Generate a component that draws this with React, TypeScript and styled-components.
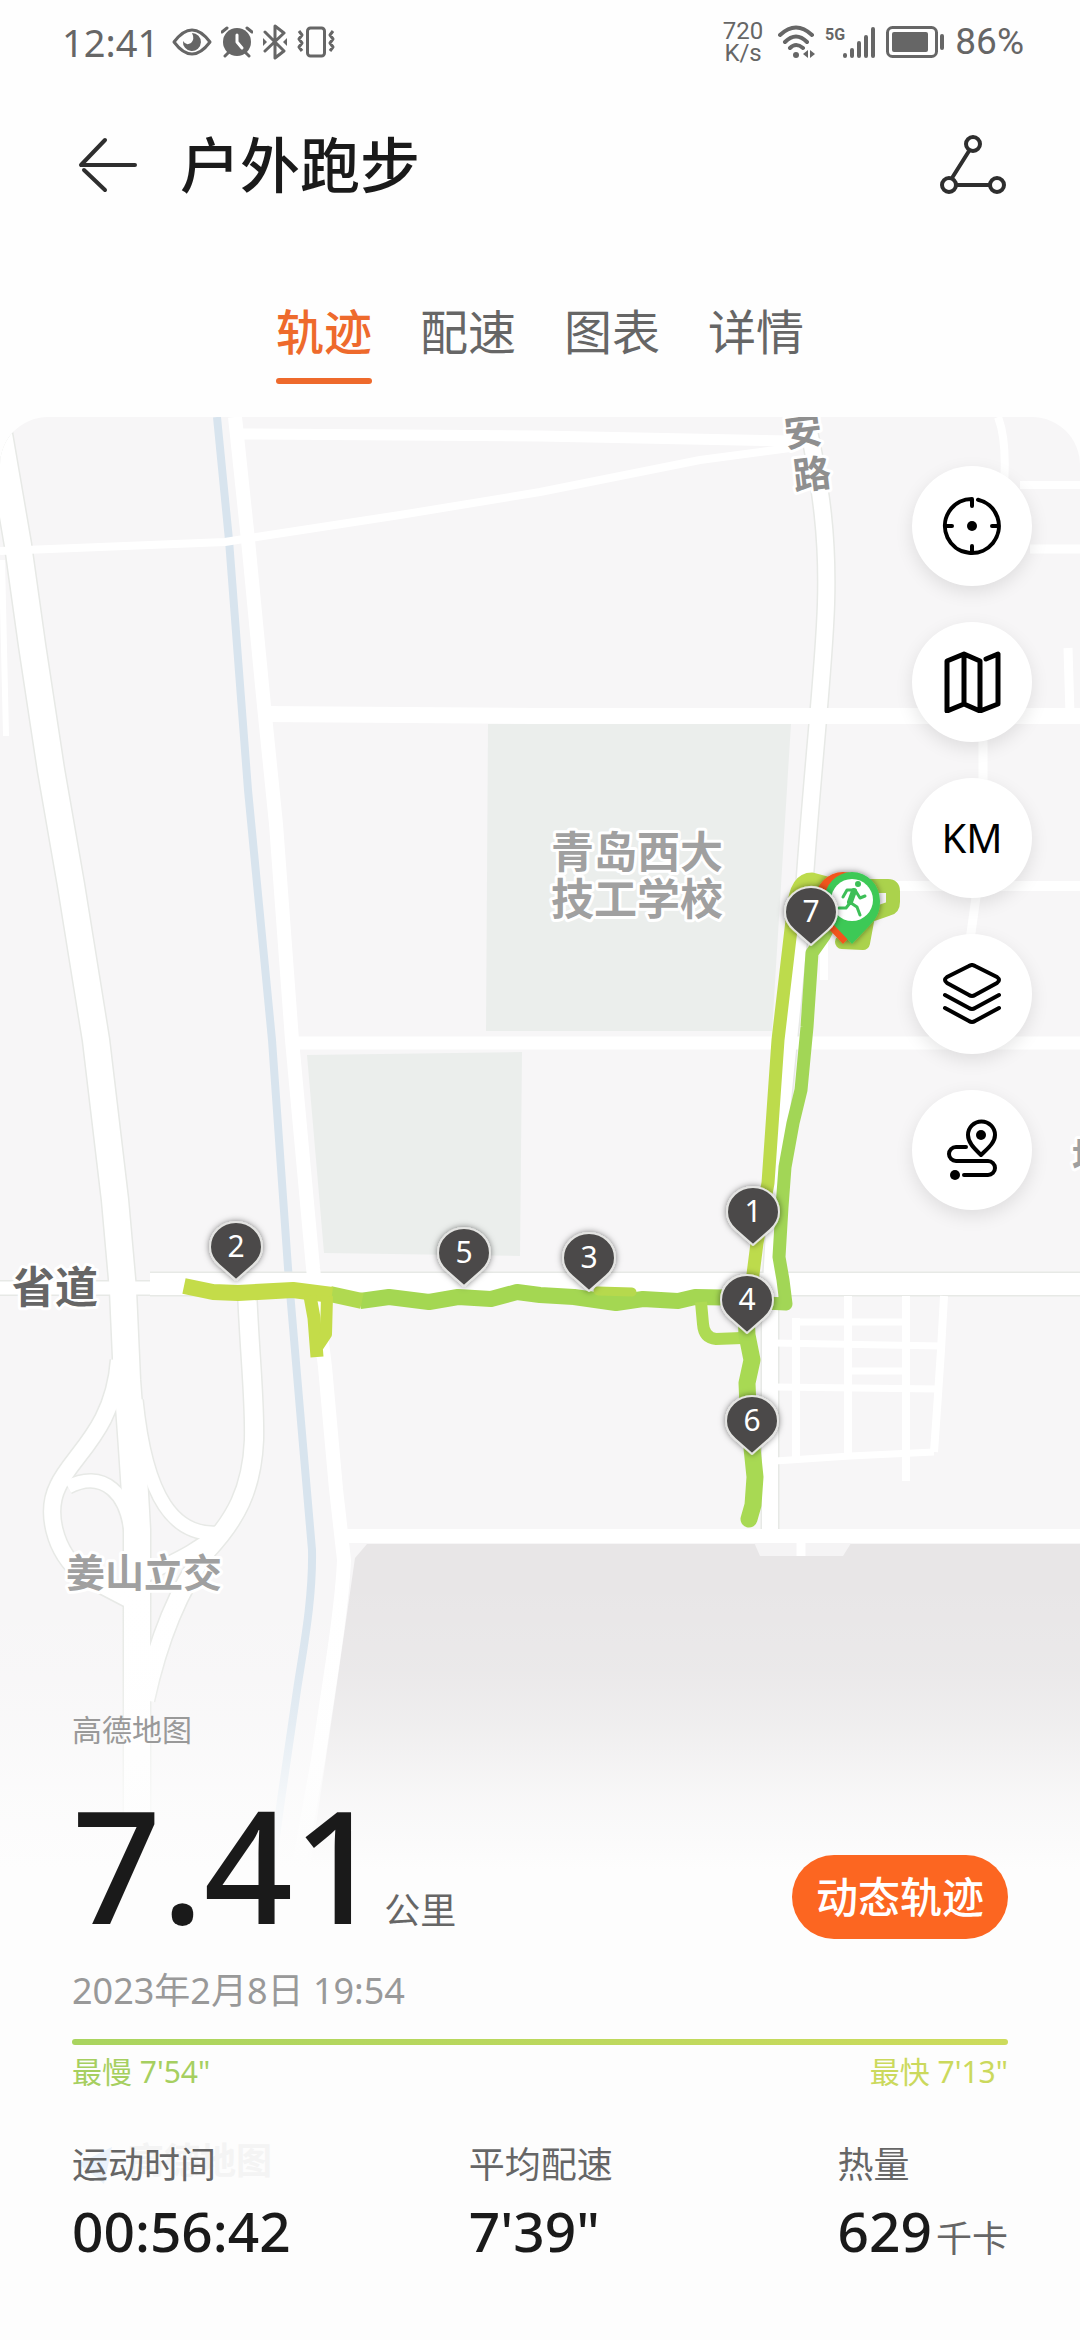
import React from "react";
import styled, { createGlobalStyle } from "styled-components";

const GlobalStyle = createGlobalStyle`
  *, *::before, *::after { box-sizing: border-box; }
  body {
    margin: 0;
    background: #fefefe;
    color: #1a1a1a;
    font-family: "Noto Sans", "Noto Sans CJK SC", sans-serif;
  }
  button {
    margin: 0;
    padding: 0;
    border: 0;
    background: none;
    color: inherit;
    font: inherit;
    cursor: pointer;
  }
`;

const Page = styled.div`
  min-height: 100vh;
  display: flex;
  flex-direction: column;
`;

const StatusBar = styled.div`
  display: flex;
  align-items: center;
  justify-content: space-between;
  height: 84px;
  padding: 0 56px 0 62px;
  color: #666;
`;

const StatusGroup = styled.div`
  display: flex;
  align-items: center;
  gap: 9px;
`;

const Clock = styled.span`
  font-size: 38px;
  line-height: 40px;
  margin-right: 4px;
`;

const NetSpeed = styled.span`
  display: flex;
  flex-direction: column;
  align-items: center;
  font-family: Roboto, "Noto Sans", sans-serif;
  font-size: 24px;
  line-height: 22px;
  margin-right: 6px;
`;

const BatteryLevel = styled.span`
  font-family: Roboto, "Noto Sans", sans-serif;
  font-size: 37px;
  line-height: 40px;
`;

const Header = styled.header`
  display: flex;
  align-items: center;
  height: 162px;
  padding: 0 72px 0 76px;
`;

const IconButton = styled.button`
  display: flex;
`;

const Title = styled.h1`
  flex: 1;
  margin: 0 0 0 40px;
  font-size: 60px;
  line-height: 84px;
  font-weight: 500;
`;

const Tabs = styled.nav`
  display: flex;
  justify-content: center;
  gap: 48px;
  padding: 50px 0 33px;
`;

const Tab = styled.button<{ $active?: boolean }>`
  font-size: 48px;
  line-height: 72px;
  font-weight: ${(p) => (p.$active ? 500 : 400)};
  color: ${(p) => (p.$active ? "#ee6a2c" : "#666")};

  &::after {
    content: "";
    display: block;
    height: 6px;
    margin-top: 10px;
    border-radius: 3px;
    background: ${(p) => (p.$active ? "#ee6a2c" : "transparent")};
  }
`;

const TrackSection = styled.main`
  position: relative;
  flex: 1;
  display: flex;
  flex-direction: column;
  justify-content: space-between;
  overflow: hidden;
  border-radius: 48px 48px 0 0;
`;

const MapCanvas = styled.svg`
  position: absolute;
  inset: 0;
  width: 100%;
  height: 100%;
`;

const Tools = styled.div`
  position: relative;
  align-self: flex-end;
  display: flex;
  flex-direction: column;
  gap: 36px;
  padding: 49px 48px 0 0;
`;

const ToolButton = styled.button`
  display: flex;
  align-items: center;
  justify-content: center;
  width: 120px;
  height: 120px;
  border-radius: 50%;
  background: #fff;
  color: #000;
  font-size: 40px;
  line-height: 48px;
  box-shadow: 0 6px 18px rgba(0, 0, 0, 0.1);
`;

const Summary = styled.section`
  position: relative;
  padding: 0 72px 73px;
`;

const Attribution = styled.p`
  margin: 0 0 39px;
  font-size: 30px;
  line-height: 40px;
  color: #999;
`;

const Hero = styled.div`
  display: flex;
  align-items: flex-end;
  justify-content: space-between;
  height: 150px;
`;

const Distance = styled.p`
  display: flex;
  align-items: baseline;
  gap: 2px;
  margin: 0;
`;

const DistanceValue = styled.span`
  font-size: 156px;
  line-height: 150px;
  font-weight: 500;
`;

const Unit = styled.span`
  font-size: 36px;
  line-height: 48px;
  font-weight: 400;
  color: #666;
`;

const ReplayButton = styled.button`
  height: 84px;
  padding: 0 24px;
  border-radius: 42px;
  background: #fc6621;
  color: #fff;
  font-size: 42px;
  line-height: 84px;
  font-weight: 500;
`;

const StartTime = styled.p`
  margin: 25px 0 21px;
  font-size: 36px;
  line-height: 54px;
  color: #999;
`;

const PaceBar = styled.div`
  height: 6px;
  border-radius: 3px;
  background: linear-gradient(90deg, #a9d45f, #cddb5c);
`;

const PaceRange = styled.div`
  display: flex;
  justify-content: space-between;
  margin-top: 7px;
  font-size: 30px;
  line-height: 40px;
`;

const PaceLabel = styled.span<{ $color: string }>`
  color: ${(p) => p.$color};
`;

const Metrics = styled.dl`
  display: grid;
  grid-template-columns: 397fr 369fr 170fr;
  margin: 49px 0 0;
`;

const MetricName = styled.dt`
  font-size: 36px;
  line-height: 48px;
  color: #666;
`;

const MetricValue = styled.dd`
  display: flex;
  align-items: baseline;
  gap: 4px;
  margin: 6px 0 0;
  font-size: 55px;
  line-height: 72px;
  font-weight: 500;
  white-space: nowrap;
`;

const StatusIcons = () => (
  <>
    <svg width="40" height="28" viewBox="0 0 40 28" fill="none" aria-label="护眼">
      <path d="M2 14Q20-10 38 14Q20 38 2 14Z" stroke="#666" strokeWidth="3" strokeLinejoin="round" />
      <path d="M20 5A9 9 0 1 1 11 13Q14 18 19 15Q23 11 20 5Z" fill="#666" />
    </svg>
    <svg width="32" height="32" viewBox="0 0 32 32" fill="none" aria-label="闹钟">
      <circle cx="16" cy="16" r="14" fill="#666" />
      <path d="M1 6L6 2M31 6L26 2M4 30L7 27M28 30L25 27" stroke="#666" strokeWidth="3" strokeLinecap="round" />
      <path d="M16 9V16L21 22" stroke="#fff" strokeWidth="3" strokeLinecap="round" strokeLinejoin="round" />
    </svg>
    <svg width="26" height="36" viewBox="0 0 26 36" fill="none" aria-label="蓝牙">
      <path d="M3 8L22 27L13 34V2L22 9L3 27" stroke="#666" strokeWidth="3" strokeLinejoin="round" strokeLinecap="round" />
      <path d="M1 14L5 18L1 22ZM25 14L21 18L25 22Z" fill="#666" />
    </svg>
    <svg width="38" height="32" viewBox="0 0 38 32" fill="none" aria-label="振动">
      <rect x="10.500" y="2" width="17" height="28" rx="3" stroke="#666" strokeWidth="3" />
      <path d="M2 5L5 9L2 13L5 17L2 21L5 25M36 5L33 9L36 13L33 17L36 21L33 25" stroke="#666" strokeWidth="3" strokeLinejoin="round" />
    </svg>
  </>
);

const WifiIcon = () => (
  <svg width="38" height="34" viewBox="0 0 38 34" fill="none" aria-label="Wi-Fi">
    <path d="M2 10Q18-5 34 10M7 17Q18 6 29 17M12 23Q18 17 25 23" stroke="#666" strokeWidth="4" strokeLinecap="round" />
    <circle cx="18" cy="30" r="3" fill="#666" />
    <path d="M30 25V33L25 29ZM32 25V33L37 29Z" fill="#666" />
  </svg>
);

const SignalIcon = () => (
  <svg width="52" height="34" viewBox="0 0 52 34" aria-label="5G">
    <text x="0" y="15" fontFamily="Roboto, sans-serif" fontSize="16" fontWeight="700" fill="#666">5G</text>
    <path d="M20 30V31M27 25V31M34 18V31M41 12V31M48 4V31" stroke="#666" strokeWidth="4" strokeLinecap="round" />
  </svg>
);

const BatteryIcon = () => (
  <svg width="60" height="32" viewBox="0 0 60 32" aria-label="电量">
    <rect x="1.500" y="1.500" width="49" height="29" rx="5" fill="none" stroke="#666" strokeWidth="3" />
    <rect x="6" y="6" width="36" height="20" rx="2" fill="#666" />
    <rect x="54" y="8" width="4" height="16" rx="2" fill="#666" />
  </svg>
);

type ToolIconProps = { children: React.ReactNode };
const ToolIcon = ({ children }: ToolIconProps) => (
  <svg width="60" height="62" viewBox="0 0 60 62" fill="none" stroke="#000" strokeWidth="4" strokeLinecap="round" strokeLinejoin="round" aria-hidden="true">
    {children}
  </svg>
);

const casedRoads: [string, number][] = [
  ["M-4 417L18 545L32 645L51 770L71 885L96 1040L115 1200L123 1290L127 1380Q134 1470 137 1530V1820", 26],
  ["M0 1288H160", 13],
  ["M150 1284H1080", 22],
  ["M119 1360C114 1430 72 1455 58 1486C46 1510 52 1550 84 1576L130 1600", 16],
  ["M68 1487C100 1470 132 1488 132 1550", 13],
  ["M136 1400C146 1500 175 1536 218 1533", 13],
  ["M247 1290C250 1360 255 1400 254 1440C252 1490 235 1520 207 1550C178 1590 158 1640 145 1700", 18],
  ["M222 1530C190 1556 170 1562 136 1580", 13],
  ["M806 417C822 490 828 540 826 604C824 670 814 750 804 890L780 1130L770 1300V1536", 16],
];

const plainRoads: [string, number][] = [
  ["M235 417L248 540L264 706L276 824L292 1040L313 1268L325 1367L336 1489L344 1560C342 1610 328 1690 318 1760L300 1860", 14],
  ["M240 434L540 436L790 441", 11],
  ["M0 551L225 542L250 538L400 515L540 492L700 460L790 448", 8],
  ["M262 714L540 716H1080", 16],
  ["M2 560L6 736", 6],
  ["M290 1043H1080", 13],
  ["M850 886H1080", 10],
  ["M340 1536H1080", 14],
  ["M801 1536V1556", 9],
  ["M824 930V980", 8],
  ["M998 417Q1007 440 1004 485M1020 485H1080", 8],
  ["M1030 549H1080M1068 648L1070 715", 9],
  ["M983 735V780M977 890L970 940", 9],
  ["M796 1318V1460M848 1296V1454M906 1296V1481M944 1296L941 1350L938 1395L934 1452", 8],
  ["M796 1322H906M775 1343L941 1346M848 1371H906M775 1387L938 1389M775 1461L850 1456L934 1452", 7],
];

const pins = [
  { n: 2, x: 236, y: 1280 },
  { n: 5, x: 464, y: 1286 },
  { n: 3, x: 589, y: 1291 },
  { n: 1, x: 753, y: 1245 },
  { n: 4, x: 747, y: 1333 },
  { n: 6, x: 752, y: 1454 },
  { n: 7, x: 811, y: 945 },
];

const pinShape = "M0 0L-17 -15C-24 -21 -26 -27 -26 -33A26 25 0 0 1 26 -33C26 -27 24 -21 17 -15Z";
const endPinShape = "M0 0L-18 -19C-26 -27 -28 -34 -28 -43A28 29 0 0 1 28 -43C28 -34 26 -27 18 -19Z";

const haloText = {
  fontFamily: '"Noto Sans CJK SC", sans-serif',
  stroke: "#fff",
  strokeWidth: 6,
  strokeLinejoin: "round" as const,
  paintOrder: "stroke",
};

const TrackMap = () => (
  <MapCanvas viewBox="0 417 1080 1923" preserveAspectRatio="xMidYMin slice" role="img" aria-label="跑步轨迹地图">
    <defs>
      <linearGradient id="fade" x1="0" y1="0" x2="0" y2="1">
        <stop offset="0" stopColor="#fdfdfd" stopOpacity="0" />
        <stop offset="0.300" stopColor="#fdfdfd" stopOpacity="0.120" />
        <stop offset="0.500" stopColor="#fdfdfd" stopOpacity="0.350" />
        <stop offset="0.750" stopColor="#fdfdfd" stopOpacity="0.750" />
        <stop offset="1" stopColor="#fdfdfd" stopOpacity="1" />
      </linearGradient>
      <filter id="pinShadow" x="-40%" y="-40%" width="180%" height="180%">
        <feDropShadow dx="0" dy="0" stdDeviation="3" floodColor="#000" floodOpacity="0.500" />
      </filter>
    </defs>

    <rect x="0" y="417" width="1080" height="1923" fill="#f7f6f7" />
    <path d="M488 724H791L772 1031H486Z" fill="#ebeeec" />
    <path d="M307 1055L522 1052L520 1256L324 1253Z" fill="#ebeeec" />
    <path d="M355 1558L367 1544H1080V2340H240L336 1690Z" fill="#e8e6e7" />
    <path d="M753 1540L760 1556H843L853 1540Z" fill="#f5f4f5" />
    <path d="M217 417L229 540L248 790L272 1040L288 1268L300 1410L312 1550C313 1600 303 1650 297 1690L281 1800L262 1940" fill="none" stroke="#d8e4ee" strokeWidth="8" />

    <g fill="none" strokeLinejoin="round">
      {casedRoads.map(([d, w]) => <path key={d} d={d} stroke="#e7e9e6" strokeWidth={w + 3} />)}
      {plainRoads.map(([d, w]) => <path key={d} d={d} stroke="#fff" strokeWidth={w} />)}
      {casedRoads.map(([d, w]) => <path key={d} d={d} stroke="#fff" strokeWidth={w} />)}
    </g>

    <g fill="#a0a0a0" fontWeight="700" {...haloText}>
      <text x="637" y="868" fontSize="43" textAnchor="middle">青岛西大</text>
      <text x="637" y="915" fontSize="43" textAnchor="middle">技工学校</text>
      <text x="144" y="1587" fontSize="39" textAnchor="middle">姜山立交</text>
      <text x="1072" y="1170" fontSize="36">地</text>
      <text x="12" y="1303" fontSize="43" fill="#666">省道</text>
      <g fill="#8f8f8f" fontSize="38" textAnchor="middle">
        <text transform="translate(803 431) rotate(-7)" y="14">安</text>
        <text transform="translate(812 474) rotate(-7)" y="14">路</text>
      </g>
    </g>

    <g fill="none" strokeLinejoin="round">
      <path d="M360 1301L389 1297L429 1302L458 1297L491 1299L517 1292L540 1295L574 1297L616 1303L643 1299L678 1301L695 1297L750 1298" stroke="#a4d752" strokeWidth="16" />
      <path d="M330 1294L362 1301" stroke="#b0d950" strokeWidth="16" />
      <path d="M184 1286L213 1292L238 1293L293 1290L332 1295" stroke="#c4dc49" strokeWidth="16" />
      <path d="M310 1296L314 1318L317 1357" stroke="#c4dc49" strokeWidth="13" />
      <path d="M327 1296L326 1334L318 1346" stroke="#c4dc49" strokeWidth="12" />
      <path d="M598 1291L632 1292" stroke="#b6d94d" strokeWidth="9" strokeLinecap="round" />
      <path d="M701 1302L703 1324Q704 1338 716 1339L742 1338" stroke="#aedb54" strokeWidth="12" />
      <path d="M746 1310L747 1335L752 1360L747 1383L748 1407L752 1448L755 1477L753 1505L749 1519" stroke="#a8d953" strokeWidth="17" strokeLinecap="round" />
      <path d="M751 1290L757 1243L768 1183L778 1040L793 912Q795 879 812 879L838 886" stroke="#bddb4c" strokeWidth="13" />
      <path d="M832 920L824 936L812 953L807 1027L801 1090L793 1123L785 1167L782 1207L779 1257L783 1280L786 1304L765 1303" stroke="#a2d656" strokeWidth="13" />
      <path d="M862 886H888Q893 886 893 891V902Q893 908 888 909L868 916L863 943L842 942" stroke="#abd24c" strokeWidth="14" strokeLinecap="round" />
    </g>

    <g filter="url(#pinShadow)">
      <path d={endPinShape} transform="translate(843 944)" fill="#f2541f" />
      <path d={endPinShape} transform="translate(852 944)" fill="#3dc957" />
    </g>
    <circle cx="852" cy="900" r="21" fill="#fff" />
    <g fill="none" stroke="#3dbf57" strokeWidth="3" strokeLinejoin="round" strokeLinecap="round">
      <path d="M843 897L847 890L855 890L860 898L865 896" />
      <path d="M854 891L850 902" strokeWidth="6" />
      <path d="M850 903L846 908L839 908M851 903L857 907L860 915" />
      <circle cx="858" cy="884" r="1.500" />
    </g>

    {pins.map(({ n, x, y }) => (
      <g key={n} transform={`translate(${x} ${y})`}>
        <path d={pinShape} fill="#4b4a48" stroke="#e4e4e2" strokeWidth="2" strokeLinejoin="round" filter="url(#pinShadow)" />
        <text y="-23" textAnchor="middle" fontFamily='"Noto Sans", sans-serif' fontSize="30" fill="#fff">{n}</text>
      </g>
    ))}

    <rect x="0" y="1580" width="1080" height="290" fill="url(#fade)" />
    <rect x="0" y="1869" width="1080" height="471" fill="#fdfdfd" />
    <path d="M78 2164L112 2147L104 2184L92 2174Z" fill="#eaf2fb" />
    <text x="128" y="2174" fontFamily='"Noto Sans CJK SC", sans-serif' fontSize="36" fontWeight="700" fill="#f4f4f4">高德地图</text>
  </MapCanvas>
);

const App = () => (
  <Page>
    <GlobalStyle />
    <StatusBar>
      <StatusGroup>
        <Clock>12:41</Clock>
        <StatusIcons />
      </StatusGroup>
      <StatusGroup>
        <NetSpeed>
          <span>720</span>
          <span>K/s</span>
        </NetSpeed>
        <WifiIcon />
        <SignalIcon />
        <BatteryIcon />
        <BatteryLevel>86%</BatteryLevel>
      </StatusGroup>
    </StatusBar>

    <Header>
      <IconButton aria-label="返回">
        <svg width="64" height="60" viewBox="0 0 64 60" fill="none" stroke="#2e2e2e" strokeWidth="4" strokeLinecap="round">
          <path d="M29 5L5 30H59M8 35L29 55" strokeLinejoin="round" />
        </svg>
      </IconButton>
      <Title>户外跑步</Title>
      <IconButton aria-label="分享">
        <svg width="72" height="62" viewBox="0 0 72 62" fill="none" stroke="#2e2e2e" strokeWidth="4">
          <circle cx="37" cy="10" r="7" />
          <circle cx="13" cy="51" r="7" />
          <circle cx="61" cy="51" r="7" />
          <path d="M33 17L16 44M20 51H54" />
        </svg>
      </IconButton>
    </Header>

    <Tabs>
      <Tab $active aria-current="page">轨迹</Tab>
      <Tab>配速</Tab>
      <Tab>图表</Tab>
      <Tab>详情</Tab>
    </Tabs>

    <TrackSection>
      <TrackMap />
      <Tools>
        <ToolButton aria-label="定位">
          <ToolIcon>
            <path d="M36 4.700A27 27 0 1 1 30 4V11M30 58V51M3 31H10M57 31H50" />
            <circle cx="30" cy="31" r="5" fill="#000" stroke="none" />
          </ToolIcon>
        </ToolButton>
        <ToolButton aria-label="地图类型">
          <ToolIcon>
            <path d="M44 8L56 3V53L38 60L22 53L5 60V10L22 3L38 10V60M22 3V53" strokeWidth="5" />
          </ToolIcon>
        </ToolButton>
        <ToolButton>KM</ToolButton>
        <ToolButton aria-label="图层">
          <ToolIcon>
            <path d="M27 3Q30 1 33 3L55 14Q59 17 55 20L33 32Q30 34 27 32L5 20Q1 17 5 14Z" />
            <path d="M3 32L27 45Q30 47 33 45L57 32M3 45L27 58Q30 60 33 58L57 45" />
          </ToolIcon>
        </ToolButton>
        <ToolButton aria-label="路线">
          <ToolIcon>
            <path d="M39 36C33 30 26 24 26 16A13 13 0 0 1 53 16C53 24 45 30 39 36Z" />
            <path d="M24 28H14A7 7 0 0 0 14 42H46A7 7 0 0 1 46 56H22" />
            <circle cx="39" cy="16" r="5" fill="#000" stroke="none" />
            <circle cx="13" cy="56" r="5" fill="#000" stroke="none" />
          </ToolIcon>
        </ToolButton>
      </Tools>

      <Summary>
        <Attribution>高德地图</Attribution>
        <Hero>
          <Distance>
            <DistanceValue>7.41</DistanceValue>
            <Unit>公里</Unit>
          </Distance>
          <ReplayButton>动态轨迹</ReplayButton>
        </Hero>
        <StartTime>2023年2月8日 19:54</StartTime>
        <PaceBar />
        <PaceRange>
          <PaceLabel $color="#a6cf60">最慢 7'54"</PaceLabel>
          <PaceLabel $color="#cbd95c">最快 7'13"</PaceLabel>
        </PaceRange>
        <Metrics>
          <div>
            <MetricName>运动时间</MetricName>
            <MetricValue>00:56:42</MetricValue>
          </div>
          <div>
            <MetricName>平均配速</MetricName>
            <MetricValue>7'39"</MetricValue>
          </div>
          <div>
            <MetricName>热量</MetricName>
            <MetricValue>
              629<Unit>千卡</Unit>
            </MetricValue>
          </div>
        </Metrics>
      </Summary>
    </TrackSection>
  </Page>
);

export default App;
